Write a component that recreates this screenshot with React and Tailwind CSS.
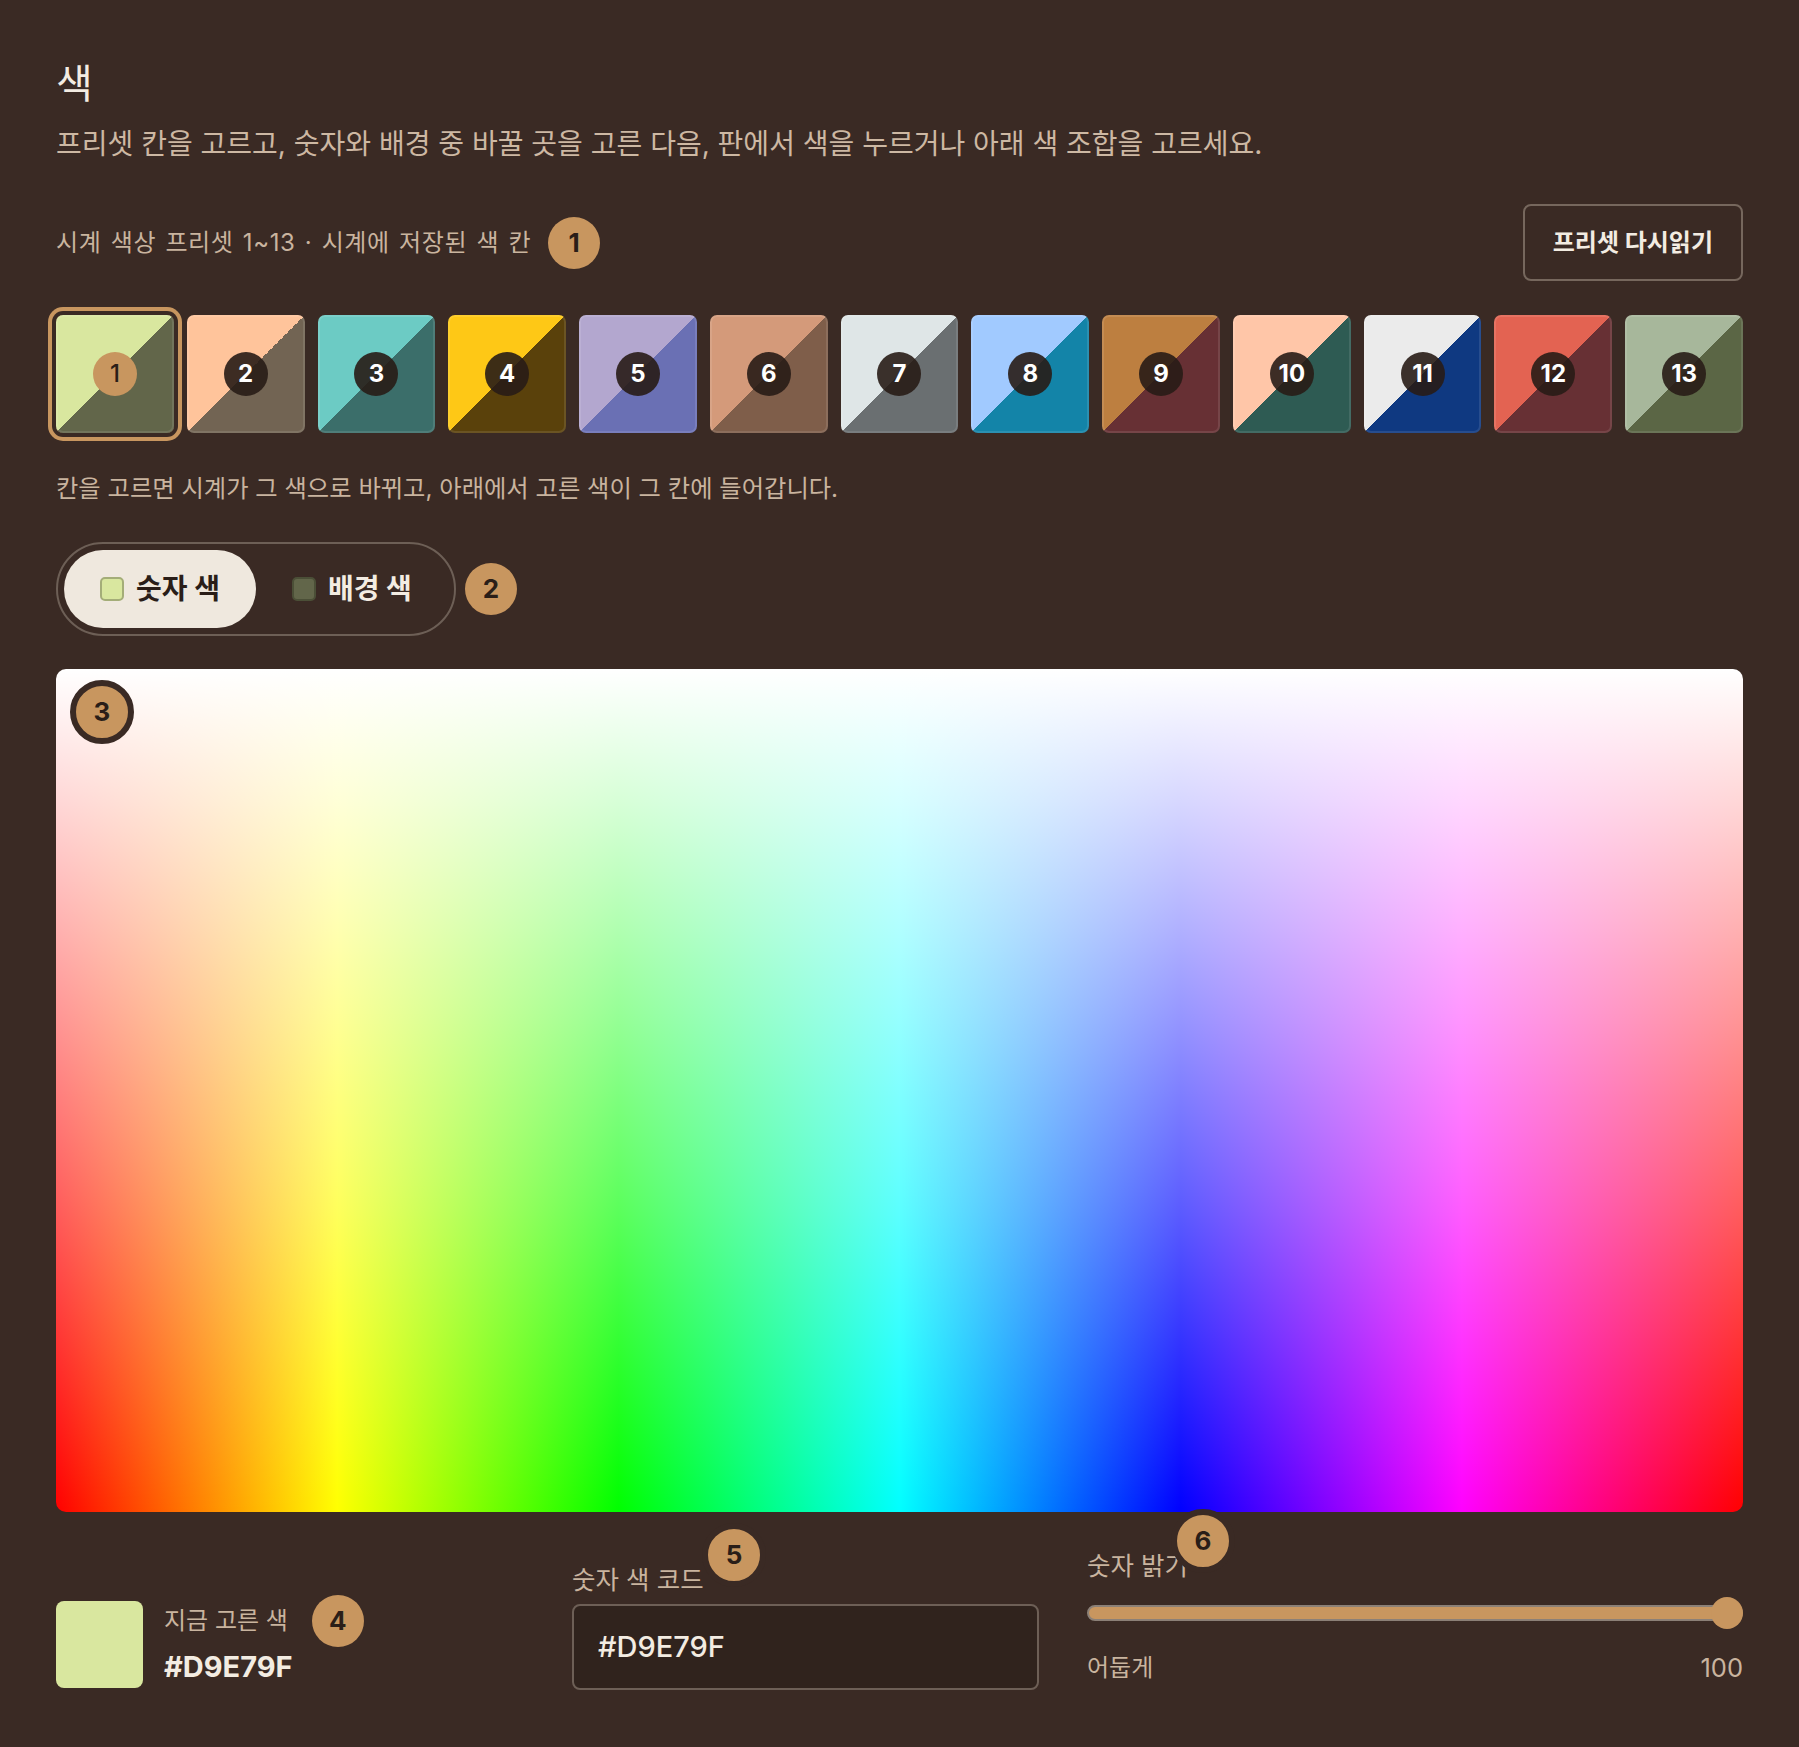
import { useState } from 'react';

const PRESETS = [
  { fg: '#d9e79f', bg: '#62664a' },
  { fg: '#ffc49b', bg: '#726453' },
  { fg: '#6ccbc4', bg: '#3b6e6a' },
  { fg: '#fec816', bg: '#5a410b' },
  { fg: '#b3a7cf', bg: '#6a70b4' },
  { fg: '#d49a7a', bg: '#7f5e4a' },
  { fg: '#dfe6e7', bg: '#6a6f71' },
  { fg: '#a1caff', bg: '#1384a8' },
  { fg: '#bd7f40', bg: '#673034' },
  { fg: '#ffc6a8', bg: '#2e5b53' },
  { fg: '#ebebeb', bg: '#0f3981' },
  { fg: '#e36352', bg: '#673034' },
  { fg: '#a7b79b', bg: '#5b6645' },
];

function Badge({ n, ringed = false, className = '' }) {
  return (
    <span
      className={
        'flex shrink-0 items-center justify-center rounded-full bg-[#c8965f] text-[26px] font-bold leading-none text-[#2a1e18] ' +
        (ringed ? 'h-[64px] w-[64px] border-[6px] border-[#3a2a24] ' : 'h-[52px] w-[52px] ') +
        className
      }
    >
      {n}
    </span>
  );
}

function PresetTile({ index, fg, bg, selected, onClick }) {
  return (
    <button
      type="button"
      onClick={onClick}
      className={
        'relative flex aspect-square items-center justify-center rounded-[7px] border-2 border-white/10 bg-origin-border ' +
        (selected ? 'ring-4 ring-[#c8965f] ring-offset-4 ring-offset-[#3a2a24]' : '')
      }
      style={{ backgroundImage: `linear-gradient(to bottom right, ${fg} 50%, ${bg} 50%)` }}
    >
      <span
        className={
          'flex h-[44px] w-[44px] items-center justify-center rounded-full text-[24px] leading-none ' +
          (selected ? 'bg-[#c8965f] font-medium text-[#2a1e18]' : 'bg-[#281c16]/90 font-bold text-white')
        }
      >
        {index + 1}
      </span>
    </button>
  );
}

export default function App() {
  const [selected, setSelected] = useState(0);
  const [target, setTarget] = useState('fg');
  const preset = PRESETS[selected];
  const current = target === 'fg' ? preset.fg : preset.bg;

  return (
    <div className="min-h-screen bg-[#3a2a24] px-[56px] pb-[56px] pt-[62px] font-['Inter','Noto_Sans_CJK_KR',sans-serif] text-[#c9b49f]">
      <h2 className="text-[40px] font-normal leading-[44px] text-[#f3ece2]">색</h2>
      <p className="mt-[20px] text-[28px] leading-[36px] text-[#cdb8a3]">
        프리셋 칸을 고르고, 숫자와 배경 중 바꿀 곳을 고른 다음, 판에서 색을 누르거나 아래 색 조합을 고르세요.
      </p>

      <div className="mt-[42px] flex items-center justify-between">
        <div className="flex items-center gap-[17px]">
          <span className="text-[24px] leading-[32px] tracking-[0.6px] [word-spacing:2px]">
            시계 색상 프리셋 1~13 · 시계에 저장된 색 칸
          </span>
          <Badge n={1} />
        </div>
        <button
          type="button"
          className="h-[77px] rounded-[8px] border-2 border-[#76675d] px-[28px] text-[24px] font-bold text-[#f3ece2]"
        >
          프리셋 다시읽기
        </button>
      </div>

      <div className="mt-[34px] grid grid-cols-[repeat(13,minmax(0,1fr))] gap-[13px]">
        {PRESETS.map((p, i) => (
          <PresetTile key={i} index={i} fg={p.fg} bg={p.bg} selected={i === selected} onClick={() => setSelected(i)} />
        ))}
      </div>

      <p className="mt-[39px] text-[24.3px] leading-[32px]">
        칸을 고르면 시계가 그 색으로 바뀌고, 아래에서 고른 색이 그 칸에 들어갑니다.
      </p>

      <div className="mt-[38px] flex items-center gap-[9px]">
        <div className="flex rounded-full border-2 border-[#6d5f56] p-[6px]">
          <button
            type="button"
            onClick={() => setTarget('fg')}
            className={
              'flex h-[78px] items-center gap-[12px] rounded-full px-[36px] text-[28px] font-bold ' +
              (target === 'fg' ? 'bg-[#efe8de] text-[#2a1e18]' : 'text-[#f3ece2]')
            }
          >
            <span className="h-[24px] w-[24px] rounded-[5px] border-2 border-[#a4ad78] bg-[#d9e79f]" />
            숫자 색
          </button>
          <button
            type="button"
            onClick={() => setTarget('bg')}
            className={
              'flex h-[78px] items-center gap-[12px] rounded-full px-[36px] text-[28px] font-bold ' +
              (target === 'bg' ? 'bg-[#efe8de] text-[#2a1e18]' : 'text-[#f3ece2]')
            }
          >
            <span className="h-[24px] w-[24px] rounded-[5px] border-2 border-[#4b4f37] bg-[#62664a]" />
            배경 색
          </button>
        </div>
        <Badge n={2} />
      </div>

      <div className="relative mt-[33px] h-[843px] rounded-[10px] bg-[linear-gradient(to_bottom,#ffffff,rgba(255,255,255,0)),linear-gradient(to_right,#ff0000,#ffff00,#00ff00,#00ffff,#0000ff,#ff00ff,#ff0000)]">
        <Badge n={3} ringed className="absolute left-[14px] top-[11px]" />
      </div>

      <div className="mt-[38px] grid grid-cols-[468px_467px_1fr] items-end gap-[48px]">
        <div className="flex items-center gap-[21px] pb-[2px]">
          <div className="h-[87px] w-[87px] rounded-[8px]" style={{ backgroundColor: current }} />
          <div className="flex flex-col gap-[14px]">
            <div className="flex items-center gap-[24px]">
              <span className="text-[24px] leading-[32px]">지금 고른 색</span>
              <Badge n={4} className="-my-[10px]" />
            </div>
            <span className="text-[29px] font-bold leading-[32px] text-[#f3ece2]">{current.toUpperCase()}</span>
          </div>
        </div>

        <div className="flex flex-col">
          <div className="relative">
            <span className="text-[25.5px] leading-[32px]">숫자 색 코드</span>
            <Badge n={5} ringed className="absolute left-[130px] top-[-41px] z-10" />
          </div>
          <input
            readOnly
            value={current.toUpperCase()}
            className="mt-[8px] h-[86px] w-full rounded-[8px] border-2 border-[#6d5f56] bg-[#30231d] px-[24px] text-[29px] font-medium text-[#f3ece2] outline-none"
          />
        </div>

        <div className="flex flex-col pb-[6px]">
          <div className="relative">
            <span className="text-[25.5px] leading-[32px]">숫자 밝기</span>
            <Badge n={6} ringed className="absolute left-[84px] top-[-41px] z-10" />
          </div>
          <div className="relative mt-[15px] flex h-[32px] items-center">
            <div className="h-[16px] w-full rounded-full border-2 border-[#8b8077] bg-[#c8965f]" />
            <div className="absolute right-0 top-0 h-[32px] w-[32px] rounded-full bg-[#c8965f]" />
          </div>
          <div className="mt-[23px] flex justify-between text-[24px] leading-[32px]">
            <span>어둡게</span>
            <span className="text-[25.5px]">100</span>
          </div>
        </div>
      </div>
    </div>
  );
}
